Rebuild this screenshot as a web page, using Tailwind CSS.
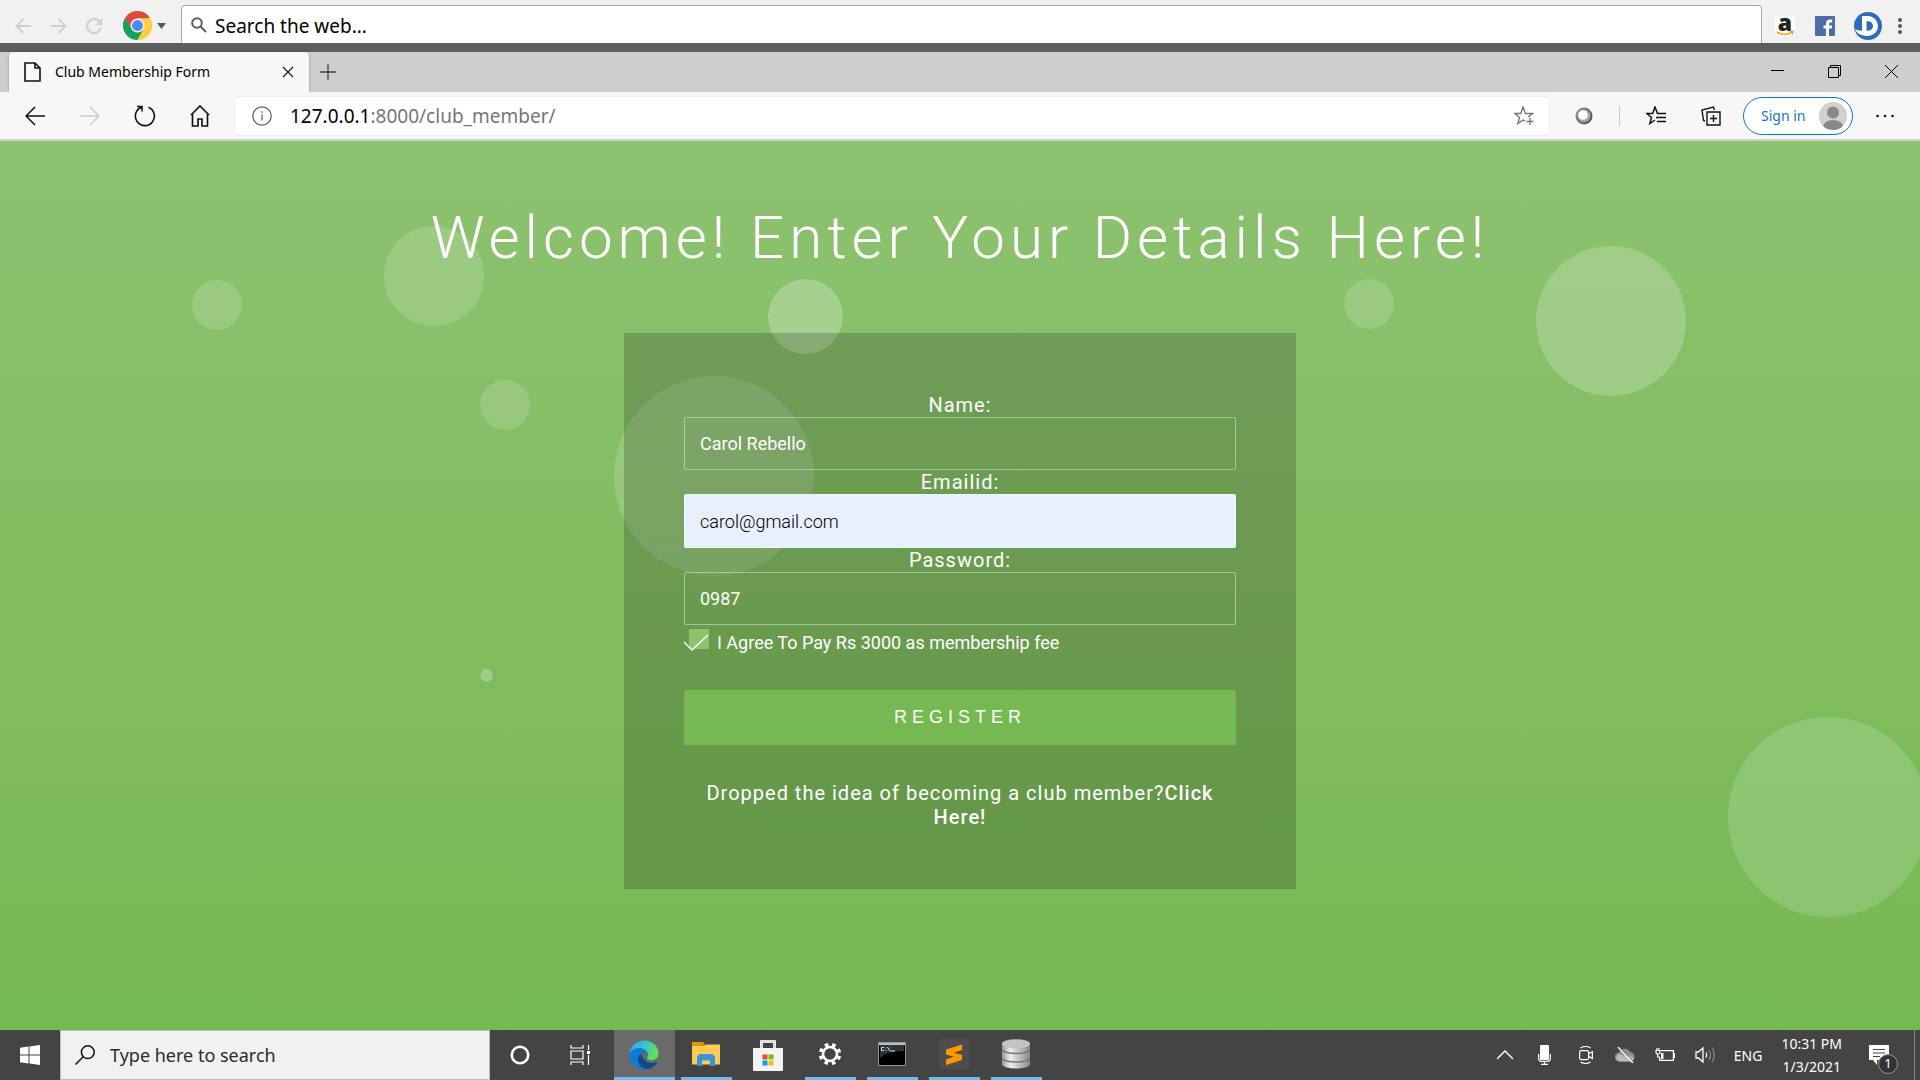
<!DOCTYPE html>
<html lang="en">
<head>
<meta charset="utf-8">
<title>Club Membership Form</title>
<script src="https://cdn.jsdelivr.net/npm/@tailwindcss/browser@4"></script>
</head>
<body class="flex min-h-screen flex-col overflow-hidden bg-[#f1f1f1] font-['Noto_Sans',sans-serif] text-black">

<!-- Desktop search bar -->
<header class="flex h-[43px] shrink-0 items-stretch bg-[#f1f1f1]">
  <div class="flex w-[181px] shrink-0 items-center pt-2 pl-[15px]">
    <button aria-label="Back" class="mr-[20px]"><svg class="block h-4 w-4" viewBox="0 0 16 16" fill="none" stroke="#d0d0d0" stroke-width="2"><path d="M16 8H1.5M8.500 1 1.500 8l7 7"/></svg></button>
    <button aria-label="Forward" class="mr-[18px]"><svg class="block h-4 w-4" viewBox="0 0 16 16" fill="none" stroke="#d0d0d0" stroke-width="2"><path d="M0 8h14.500M7.500 1l7 7-7 7"/></svg></button>
    <button aria-label="Reload" class="mr-[20px]"><svg class="block h-[18px] w-[18px]" viewBox="0 0 18 18" fill="none" stroke="#d0d0d0" stroke-width="2.200"><path d="M14.800 4.800A7 7 0 1 0 16 10.500"/><path d="M17.500 1v7h-7z" fill="#d0d0d0" stroke="none"/></svg></button>
    <button aria-label="Chrome" class="flex items-center gap-[5px]">
      <svg class="block h-[29px] w-[29px]" viewBox="0 0 48 48"><circle cx="24" cy="24" r="24" fill="#ffcd40"/><path d="M3.200 12A24 24 0 0 1 44.800 12L24 13 14 30z" fill="#dd4b3e"/><path d="M3.200 12A24 24 0 0 0 24 48l10-18-10 5-9-4z" fill="#17a05e"/><path d="M44.800 12H24v12l10 7-10 17A24 24 0 0 0 44.800 12" fill="#ffcd40"/><circle cx="24" cy="24" r="11.500" fill="#f1f1f1"/><circle cx="24" cy="24" r="9" fill="#4a8af4"/></svg>
      <svg class="block h-[6px] w-[9px]" viewBox="0 0 9 6"><path d="M0 0h9L4.500 6z" fill="#555"/></svg>
    </button>
  </div>
  <label class="mt-[5px] flex min-w-0 grow items-center gap-2 rounded-t border border-b-0 border-[#a9a9a9] bg-white pl-[9px]">
    <svg class="h-4 w-4 shrink-0" viewBox="0 0 16 16" fill="none" stroke="#5a5a5a" stroke-width="2"><circle cx="6" cy="6" r="4.800"/><path d="m9.500 9.500 5.500 5.500"/></svg>
    <input aria-label="Search the web" value="Search the web..." class="h-8 min-w-0 grow bg-transparent pt-[2px] text-[19px] outline-none">
  </label>
  <div class="flex w-[158px] shrink-0 items-center pt-2 pl-[13px]">
    <a href="#" aria-label="Amazon" class="mr-[20px] block h-5 w-5 bg-white"><svg class="overflow-visible" viewBox="0 0 20 20"><text x="10" y="15" text-anchor="middle" font-family="Open Sans" font-weight="800" font-size="23" fill="#222">a</text><path d="M2 16q8 5 15 0M15 15.500h3l-1 3" fill="none" stroke="#f90" stroke-width="1.500"/></svg></a>
    <a href="#" aria-label="Facebook" class="mr-[19px] block h-5 w-5"><svg viewBox="0 0 20 20"><rect width="20" height="20" rx="1" fill="#4c6caa"/><path d="M11 20v-7.500H8.500v-3H11V7.500C11 4.800 12.600 3.500 15 3.500h2.200v3h-1.600c-1.200 0-1.500.5-1.500 1.500v1.500h3l-.4 3h-2.700V20z" fill="#fff"/></svg></a>
    <a href="#" aria-label="Dashboard" class="mr-[16px] block h-7 w-7"><svg viewBox="0 0 28 28"><circle cx="14" cy="14" r="14" fill="#2f6bbd"/><path d="M9 4h5a9.800 9.800 0 0 1 0 20C8 24 3 22 .8 17c3 1.500 6 2 7.200 1.500V4z" fill="#fff"/><path d="M12.500 9.300h1.800a4.700 4.700 0 0 1 0 9.400h-1.800z" fill="#2f6bbd"/></svg></a>
    <button aria-label="Menu"><svg class="block h-4 w-1" viewBox="0 0 4 16" fill="#555"><circle cx="2" cy="2" r="2"/><circle cx="2" cy="8" r="2"/><circle cx="2" cy="14" r="2"/></svg></button>
  </div>
</header>

<div class="h-[9px] shrink-0 bg-[#5e5e5e]"></div>

<!-- Tab strip -->
<div class="flex h-10 shrink-0 bg-[#cecece] pl-[9px]">
  <div class="flex w-[300px] shrink-0 items-center rounded-t bg-[#f7f7f7] pr-[15px] pl-[15px] shadow-[0_0_3px_#00000050]">
    <svg class="h-5 w-[17px] shrink-0" viewBox="0 0 17 20" fill="none" stroke="#111" stroke-width="1.600"><path d="M1 1h10l5 5v13H1zM11 1v5h5"/></svg>
    <span class="ml-[14px] grow pb-[2px] text-[14px] whitespace-nowrap">Club Membership Form</span>
    <button aria-label="Close tab"><svg class="block h-3 w-3" viewBox="0 0 12 12" stroke="#222" stroke-width="1.400"><path d="m1 1 10 10M11 1 1 11"/></svg></button>
  </div>
  <button aria-label="New tab" class="ml-[11px]"><svg class="block h-4 w-4" viewBox="0 0 16 16" stroke="#444" stroke-width="1.300"><path d="M8 0v16M0 8h16"/></svg></button>
  <div class="ml-auto flex items-center gap-[44px] pr-[22px] pb-[2px]">
    <button aria-label="Minimize"><svg class="block h-[13px] w-[13px]" viewBox="0 0 13 13" stroke="#000"><path d="M0 5.500h13"/></svg></button>
    <button aria-label="Restore"><svg class="block h-[13px] w-[13px]" viewBox="0 0 13 13" fill="none" stroke="#000"><path d="M.5 2.500h10v10H.5zM2.500 2.500v-2h10v10h-2"/></svg></button>
    <button aria-label="Close"><svg class="block h-[13px] w-[13px]" viewBox="0 0 13 13" stroke="#000"><path d="m0 0 13 13M13 0 0 13"/></svg></button>
  </div>
</div>

<!-- Navigation bar -->
<nav class="flex h-[49px] shrink-0 items-center border-b-2 border-[#d0d0d0] bg-[#f7f7f7]">
  <div class="flex w-[235px] shrink-0 items-center pl-[25px]">
    <button aria-label="Back" class="mr-[35px]"><svg class="block h-5 w-5" viewBox="0 0 20 20" fill="none" stroke="#111" stroke-width="1.500"><path d="M20 10H1M10 1 1 10l9 9"/></svg></button>
    <button aria-label="Forward" class="mr-[34px]"><svg class="block h-5 w-5" viewBox="0 0 20 20" fill="none" stroke="#ccc" stroke-width="1.500"><path d="M0 10h19M10 1l9 9-9 9"/></svg></button>
    <button aria-label="Refresh" class="mr-[34px]"><svg class="block h-[22px] w-[22px]" viewBox="0 0 22 22" fill="none" stroke="#111" stroke-width="1.600"><path d="M14.500 2.300A9.500 9.500 0 1 1 7.500 2.200M3 1.500h5v5"/></svg></button>
    <button aria-label="Home"><svg class="block h-[22px] w-5" viewBox="0 0 20 22" fill="none" stroke="#111" stroke-width="1.600"><path d="m1 10 9-9 9 9M2.500 9v12H8v-7h4v7h5.500V9"/></svg></button>
  </div>
  <label class="flex h-[38px] min-w-0 grow items-center rounded bg-white pr-[15px] pl-[17px] shadow-[0_0_3px_#00000018]">
    <svg class="h-5 w-5 shrink-0" viewBox="0 0 20 20" fill="none" stroke="#666" stroke-width="1.300"><circle cx="10" cy="10" r="9.200"/><path d="M10 8.500v6M10 5.300v1.700"/></svg>
    <span class="ml-[18px] grow pt-[2px] text-[19px] whitespace-nowrap text-[#767676]"><span class="text-black">127.0.0.1</span>:8000/club_member/</span>
    <button aria-label="Add to favorites"><svg class="block h-5 w-5" viewBox="0 0 20 20" fill="none" stroke="#777" stroke-width="1.400"><path d="m14 11 4.500-3.500h-7L9 1 6.700 7.500H.8l4.700 4-1.700 6L9 14l2 1.200M16 12v7M12.500 15.500h7"/></svg></button>
  </label>
  <div class="flex shrink-0 items-center pr-[26px] pl-[26px]">
    <button aria-label="Extension"><svg class="block h-[18px] w-[18px]" viewBox="0 0 18 18"><defs><linearGradient id="g1" x1="0" y1="0" x2="1" y2="1"><stop stop-color="#999"/><stop offset="1" stop-color="#444"/></linearGradient></defs><circle cx="9" cy="9" r="8.500" fill="url(#g1)"/><circle cx="9" cy="9" r="6.500" fill="#a5a5a5"/><circle cx="8" cy="8" r="4.800" fill="#fff"/></svg></button>
    <span class="ml-[26px] h-5 w-px bg-[#c8c8c8]"></span>
    <button aria-label="Favorites" class="ml-[26px]"><svg class="block h-5 w-5" viewBox="0 0 20 20" fill="none" stroke="#111" stroke-width="1.500"><path d="M11.500 7.500 9 1 6.700 7.500H.8l4.700 4-1.700 6L9 14M11 7.500h9M10 11.500h10M11 15.500h9"/></svg></button>
    <button aria-label="Collections" class="ml-[35px]"><svg class="block h-5 w-5" viewBox="0 0 20 20" fill="none" stroke="#111" stroke-width="1.400"><path d="M6 6h13v13H6zM12.500 9v7M9 12.500h7M4 15l-1.500-.5L1 4l11.500-3 .8 3"/></svg></button>
    <button class="ml-[22px] flex h-[38px] w-[110px] items-center justify-between rounded-full border border-[#1474c4] bg-white pr-[5px] pl-[17px] text-[14px] text-[#1474c4]">Sign in
      <svg class="block h-7 w-7" viewBox="0 0 28 28"><circle cx="14" cy="14" r="14" fill="#d2d0ce"/><circle cx="14" cy="10.500" r="6" fill="#8a8886"/><path d="M4 24q2-6 10-6t10 6q-4 4-10 4T4 24" fill="#8a8886"/></svg>
    </button>
    <button aria-label="Settings and more" class="ml-[23px]"><svg class="block h-1 w-[18px]" viewBox="0 0 18 4" fill="#111"><circle cx="1.500" cy="2" r="1.300"/><circle cx="9" cy="2" r="1.300"/><circle cx="16.500" cy="2" r="1.300"/></svg></button>
  </div>
</nav>

<!-- Membership page -->
<main class="relative flex grow flex-col items-center overflow-hidden bg-linear-to-b from-[#8dc26f] to-[#76b852] pt-[60px] font-['Roboto',sans-serif] text-white">
  <div aria-hidden="true">
    <span class="absolute top-[139px] left-[10%] size-[50px] rounded-full bg-white/15"></span>
    <span class="absolute top-[85px] left-[20%] size-[100px] rounded-full bg-white/15"></span>
    <span class="absolute top-[138px] left-[40%] size-[75px] rounded-full bg-white/25"></span>
    <span class="absolute top-[138px] left-[70%] size-[50px] rounded-full bg-white/15"></span>
    <span class="absolute top-[105px] left-[80%] size-[150px] rounded-full bg-white/20"></span>
    <span class="absolute top-[239px] left-[25%] size-[50px] rounded-full bg-white/15"></span>
    <span class="absolute top-[235px] left-[32%] size-[200px] rounded-full bg-white/15"></span>
    <span class="absolute top-[528px] left-[25%] size-[13px] rounded-full bg-white/25"></span>
    <span class="absolute top-[576px] left-[90%] size-[200px] rounded-full bg-white/15"></span>
  </div>
  <h1 class="relative text-center text-[60px] leading-[74px] font-light tracking-[5px]">Welcome! Enter Your Details Here!</h1>
  <form class="relative mt-[58px] flex w-[35%] flex-col bg-black/18 p-[60px] text-center text-[20px] leading-6 font-normal tracking-[1px]">
    <label for="name">Name:</label>
    <input id="name" value="Carol Rebello" class="h-[53px] rounded-xs border border-white/40 bg-transparent px-[15px] text-[18px] tracking-normal outline-none">
    <label for="email">Emailid:</label>
    <input id="email" type="email" value="carol@gmail.com" class="h-[54px] rounded-xs border border-white/40 bg-[#e8f0fe] px-[15px] text-[18px] font-light tracking-normal text-black outline-none">
    <label for="password">Password:</label>
    <input id="password" value="0987" class="h-[53px] rounded-xs border border-white/40 bg-transparent px-[15px] text-[18px] tracking-normal outline-none">
    <div class="relative mt-1 flex items-start pl-[5px] text-[18px] tracking-normal">
      <input id="agree" type="checkbox" checked class="size-5 appearance-none bg-[#8dc26f]">
      <svg class="pointer-events-none absolute top-0 left-0 h-6 w-[26px]" viewBox="0 0 26 24" fill="none" stroke="#fff" stroke-width="1.300"><path d="m0 13 8 8L24 6"/></svg>
      <label for="agree" class="ml-2 pt-[2px]">I Agree To Pay Rs 3000 as membership fee</label>
    </div>
    <button class="mt-[35px] h-[55px] rounded-xs bg-[#76b852] pb-[2px] font-['Liberation_Sans',sans-serif] text-[18px] font-normal tracking-[5px]">REGISTER</button>
    <p class="mt-[36px]">Dropped the idea of becoming a club member?<a href="#" class="font-medium">Click Here!</a></p>
  </form>
</main>

<!-- Taskbar -->
<footer class="flex h-[50px] shrink-0 items-stretch bg-[#444] text-white">
  <button aria-label="Start" class="flex w-[60px] shrink-0 items-center justify-center"><svg class="h-5 w-5" viewBox="0 0 20 20" fill="#fff"><path d="M0 2.700 8.500 1.500v8H0zM9.500 1.400 20 0v9.500H9.500zM0 10.500h8.500v8L0 17.300zM9.500 10.500H20V20L9.500 18.600z"/></svg></button>
  <label class="flex w-[430px] shrink-0 items-center gap-[15px] border border-[#bbb] bg-[#f1f1f1] pl-[14px]">
    <svg class="h-5 w-5 shrink-0" viewBox="0 0 20 20" fill="none" stroke="#111" stroke-width="1.500"><circle cx="12.800" cy="7.200" r="6.400"/><path d="M8.200 11.800.5 19.500"/></svg>
    <input aria-label="Type here to search" value="Type here to search" class="min-w-0 grow bg-transparent text-[18px] text-[#2b2b2b] outline-none">
  </label>
  <button aria-label="Cortana" class="flex w-[60px] shrink-0 items-center justify-center"><svg class="h-5 w-5" viewBox="0 0 20 20" fill="none" stroke="#fff" stroke-width="2.600"><circle cx="10" cy="10" r="8.200"/></svg></button>
  <button aria-label="Task view" class="flex w-[64px] shrink-0 items-center justify-center pr-1"><svg class="h-5 w-5" viewBox="0 0 20 20" fill="none" stroke="#fff" stroke-width="1.200"><path d="M1 0v3h12V0M1 6h12v8H1zM1 20v-3h12v3M18.500 0v5M18.500 10v10"/><path d="M17 6h3v3h-3z" fill="#fff" stroke="none"/></svg></button>
  <button aria-label="Edge" class="flex w-[61px] shrink-0 items-center justify-center border-b-3 border-[#76b9ed] bg-[#6a6a6a] pr-[2px]">
    <svg class="mt-[2px] h-[30px] w-[30px]" viewBox="0 0 32 32"><defs><linearGradient id="e1" x1="0" x2="1" y1="0" y2=".4"><stop stop-color="#2fa8e8"/><stop offset=".5" stop-color="#33c3d0"/><stop offset="1" stop-color="#5fe05a"/></linearGradient></defs><path d="M.5 14C2 6 8.500.5 16 .5c9 0 15.500 6.500 15.500 13.500 0 5-4 7.500-8 7.500-3.500 0-5-1.500-4-3 1.500-2 1.500-5-2-7C13 9 5 9 .5 14" fill="url(#e1)"/><path d="M.5 14C4 8.500 12 7 17 10.500c2 1.500 3 3.500 2.800 5.500-1-2-2.800-3-4.800-2.500-4 1.500-4 6-2.500 9.500s5 7 10 7.500C12 34-1.500 26 .5 14" fill="#0c7bd8"/><path d="M13.500 14.500c-4 2-5.500 7-2.500 11.500 3.500 5.500 9 5.500 12.500 4 3-1.500 5-3.500 6.500-6 .3-.7-.3-1-1-.6-4 2-9.500 1.600-12.500-2-2-2.300-3.500-4.500-3-6.900" fill="#114a8b"/></svg>
  </button>
  <div class="flex gap-[11px] px-[6px]">
    <button aria-label="File Explorer" class="flex w-[51px] items-center justify-center border-b-3 border-[#76b9ed] pr-[2px]"><svg class="h-6 w-7" viewBox="0 0 28 24"><path d="M0 1.500v21h28V2.500H14L11.500 4H0z" fill="#fecb55"/><path d="M0 0h11l2 2-2 2H0z" fill="#dd9b00"/><path d="M5 24V14.500L7.500 12h13l2.500 2.500V24h-5v-5.500h-8V24z" fill="#3b94d9"/></svg></button>
    <button aria-label="Microsoft Store" class="flex w-[51px] items-center justify-center pr-[2px]"><svg class="h-[31px] w-[30px]" viewBox="0 0 30 31"><path d="M8.500 9V1.500h13V9" fill="none" stroke="#e4e4e4" stroke-width="3"/><path d="M0 8h30v22q0 1-1 1H1q-1 0-1-1z" fill="#f3f3f3"/><path d="M9.500 14.500h5v5h-5z" fill="#f04e1f"/><path d="M15.500 14.500h5v5h-5z" fill="#7fb900"/><path d="M9.500 20.500h5v5h-5z" fill="#00a3ee"/><path d="M15.500 20.500h5v5h-5z" fill="#ffb800"/></svg></button>
    <button aria-label="Settings" class="flex w-[51px] items-center justify-center border-b-3 border-[#76b9ed] pr-[2px]"><svg class="h-6 w-6" viewBox="0 0 24 24" fill="none" stroke="#fff"><circle cx="12" cy="12" r="7" stroke-width="2.600"/><circle cx="12" cy="12" r="9.500" stroke-width="3.500" stroke-dasharray="3.600 3.861" stroke-dashoffset="-1.900"/></svg></button>
    <button aria-label="Command Prompt" class="flex w-[51px] items-center justify-center border-b-3 border-[#76b9ed] pr-[2px]"><svg class="h-6 w-7" viewBox="0 0 28 24"><path d="M.5.500h27v23H.5z" fill="#000" stroke="#8e989e"/><path d="M1 1h26v2H1z" fill="#b5bec4"/><path d="M2 3h24v6Q8 9 2 16z" fill="#333"/><path d="M6 5.500H3.500v3H6M8 5.500v.8M8 8v.8M9.500 5l2.500 4M12.500 9H17" fill="none" stroke="#ddd"/></svg></button>
    <button aria-label="Sublime Text" class="flex w-[51px] items-center justify-center border-b-3 border-[#76b9ed] pr-[2px]"><svg class="h-[30px] w-[30px]" viewBox="0 0 30 30"><rect width="30" height="30" rx="2" fill="#4d4d4d"/><path d="m7 10.500 16-5v5.500l-8 2.800 8 2.200v5L7 26v-5.500l8-2.800-8-2.200z" fill="#ff9800"/></svg></button>
    <button aria-label="Database" class="flex w-[51px] items-center justify-center border-b-3 border-[#76b9ed] pr-[2px]"><svg class="h-[30px] w-7" viewBox="0 0 28 30"><defs><linearGradient id="d1"><stop stop-color="#999"/><stop offset=".3" stop-color="#eee"/><stop offset="1" stop-color="#888"/></linearGradient></defs><path d="M0 5v20c0 6 28 6 28 0V5z" fill="url(#d1)"/><path d="M0 10c0 6 28 6 28 0M0 18.500c0 6 28 6 28 0" fill="none" stroke="#777" stroke-width="1.500"/><ellipse cx="14" cy="4.800" rx="14" ry="4.600" fill="#c4c4c4"/></svg></button>
  </div>
  <div class="ml-auto flex items-center">
    <button aria-label="Show hidden icons" class="mr-[25px]"><svg class="block h-4 w-4" viewBox="0 0 16 16" fill="none" stroke="#fff" stroke-width="1.400"><path d="m0 12 8-8 8 8"/></svg></button>
    <button aria-label="Microphone" class="mr-[28px]"><svg class="block h-5 w-[13px]" viewBox="0 0 13 20"><rect x="2" width="9" height="15" rx="1" fill="#fff"/><path d="M.6 9v4q0 3.400 3 3.400h5.800q3 0 3-3.400V9M6.500 16.500v3M3 19.400h7" fill="none" stroke="#fff" stroke-width="1.200"/></svg></button>
    <button aria-label="Meet now" class="mr-[22px]"><svg class="block h-[18px] w-[14px]" viewBox="0 0 14 18" fill="none" stroke="#fff" stroke-width="1.200"><rect x=".6" y="4.600" width="9" height="9" rx="1.500"/><path d="m9.600 7.800 3.800-2v6.600l-3.800-2M1.500 2q5-3 10 0M1.500 16q5 3 10 0"/></svg></button>
    <button aria-label="OneDrive" class="mr-[20px]"><svg class="block h-4 w-5" viewBox="0 0 20 16"><path d="M4.500 14.500a4.500 4.500 0 0 1-.5-9A6 6 0 0 1 15 5a4.800 4.800 0 0 1 .5 9.500z" fill="#8f8f8f"/><path d="M4 14.500a4 4 0 0 1 0-7.500q3 0 5 2 4-2 10 2-.5 3.500-4 3.500z" fill="#b8b8b8"/><path d="m4.200 0 15 16" stroke="#444"/><path d="m3 0 15 16" stroke="#fff" stroke-width="1.400"/></svg></button>
    <button aria-label="Battery" class="mr-[20px]"><svg class="block h-[14px] w-5" viewBox="0 0 20 14" fill="none" stroke="#fff" stroke-width="1.200"><path d="M6 2.600h12.400v9.800H4.600V9M18.400 5.500h1.200v4h-1.200M2.600 6v3h2M1 2.500h4v2.300L4 6H2L1 4.800zM2 0v2M4 0v2"/><path d="M6 5h2.500v6H6z" fill="#fff" stroke="none"/></svg></button>
    <button aria-label="Volume" class="mr-[18px]"><svg class="block h-[18px] w-[21px]" viewBox="0 0 21 18" fill="none" stroke="#fff" stroke-width="1.300"><path d="M1 6h2.500L8 2v14l-4.500-4H1z"/><path d="M11 6.500q1.500 2.500 0 5"/><path d="M14 4q3 5 0 10M17 1.500q4.500 7.500 0 15" stroke="#888"/></svg></button>
    <span class="mr-[19px] text-[14px]">ENG</span>
    <div class="mr-[27px] flex flex-col text-center text-[14px] leading-[23px]"><span>10:31 PM</span><span>1/3/2021</span></div>
    <button aria-label="Notifications" class="relative mr-[25px]"><svg class="block h-5 w-5" viewBox="0 0 20 20"><path d="M0 0h20v15H8l0 5-4-5H0z" fill="#fff"/><path d="M4 4.500h12M4 8h12M4 11.500h7" stroke="#444" stroke-width="1.200"/></svg><span class="absolute top-[9px] left-[9px] flex size-5 items-center justify-center rounded-full border border-[#999] bg-[#333] text-[13px]">1</span></button>
    <span class="mr-[5px] h-[50px] w-px bg-[#8a8a8a]"></span>
  </div>
</footer>
</body>
</html>
